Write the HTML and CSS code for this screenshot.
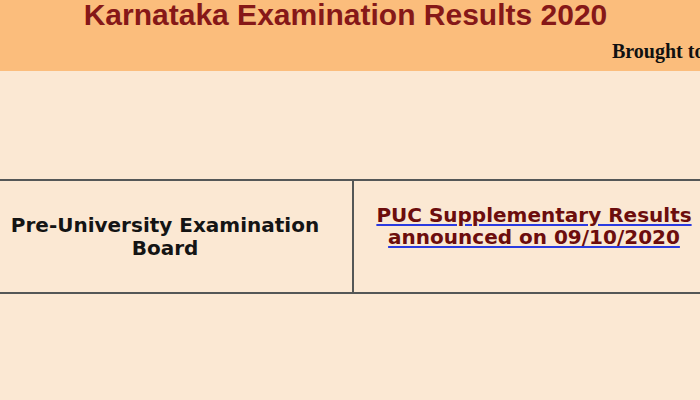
FILE: index.html
```html
<!DOCTYPE html>
<html lang="en">
<head>
<meta charset="utf-8">
<title>Karnataka Examination Results 2020</title>
<link rel="stylesheet" href="styles.css">
</head>
<body>
  <header class="masthead">
    <h1 class="masthead-title">Karnataka Examination Results 2020</h1>
    <p class="masthead-credit">Brought to you by IndiaResults.com</p>
  </header>

  <section class="board-table">
    <div class="board-cell board-name">Pre-University Examination<br>Board</div>
    <div class="board-cell board-link">
      <a href="#" class="result-link">PUC Supplementary Results<br>announced on 09/10/2020</a>
    </div>
  </section>
</body>
</html>
```

FILE: styles.css
```css
html, body {
  margin: 0;
  padding: 0;
}

body {
  width: 700px;
  height: 400px;
  overflow: hidden;
  background: #fbe8d3;
}

/* Orange banner with the page title */
.masthead {
  height: 71px;
  background: #fbbd7c;
  overflow: hidden;
}

.masthead-title {
  margin: 0;
  width: 691px;
  text-align: center;
  font-family: "Liberation Sans", Arial, sans-serif;
  font-weight: bold;
  font-size: 30px;
  line-height: 30px;
  color: #861818;
}

.masthead-credit {
  margin: 11px 0 0 612px;
  white-space: nowrap;
  font-family: "Liberation Serif", "Times New Roman", serif;
  font-weight: bold;
  font-size: 20px;
  line-height: 20px;
  color: #111;
}

/* Two-column results row */
.board-table {
  margin: 108px 0 0 -22px;
  width: 736px;
  height: 111px;
  display: grid;
  grid-template-columns: 376px 1fr;
  border-top: 2px solid #545757;
  border-bottom: 2px solid #545757;
}

.board-cell {
  text-align: center;
  font-family: "DejaVu Sans", Verdana, sans-serif;
  font-weight: bold;
  font-size: 20px;
}

.board-name {
  display: flex;
  align-items: center;
  justify-content: center;
  line-height: 23px;
  color: #141414;
  border-right: 2px solid #545757;
}

.board-link {
  padding-top: 23px;
  line-height: 22px;
}

.result-link {
  color: #6c0d0d;
  text-decoration: underline;
  text-decoration-color: #2a3ae0;
  text-decoration-thickness: 2px;
  text-underline-offset: 2px;
}
```
